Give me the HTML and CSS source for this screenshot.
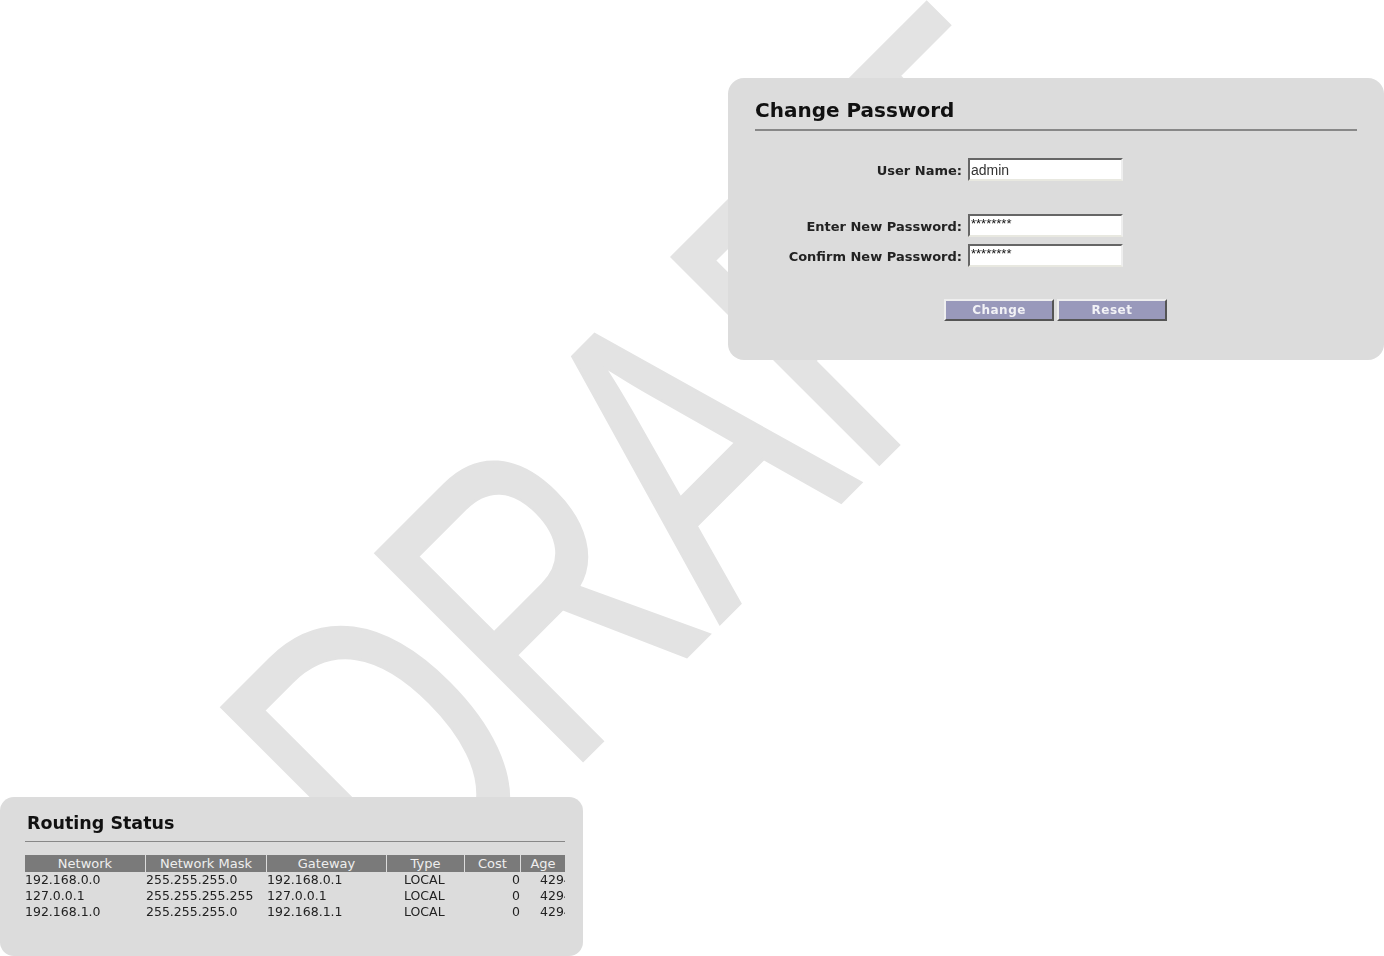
FILE: index.html
```html
<!DOCTYPE html>
<html lang="en">
<head>
<meta charset="utf-8">
<title>Change Password</title>
<link rel="stylesheet" href="styles.css">
</head>
<body>
<div class="watermark" aria-hidden="true">DRA<span class="wm-f">F</span>T</div>
<main class="page">
  <section class="panel panel-password">
    <h2 class="title">Change Password</h2>
    <form class="form">
      <label class="label" for="user">User Name:</label>
      <input class="field" id="user" type="text" value="admin">
      <div class="spacer"></div>
      <label class="label" for="new">Enter New Password:</label>
      <input class="field stars" id="new" type="text" value="********">
      <label class="label" for="confirm">Confirm New Password:</label>
      <input class="field stars" id="confirm" type="text" value="********">
      <div class="actions">
        <button class="btn" type="button">Change</button>
        <button class="btn" type="button">Reset</button>
      </div>
    </form>
  </section>
  <section class="panel panel-routing">
    <h2 class="title title-small">Routing Status</h2>
    <div class="table-clip">
      <table class="routes">
        <colgroup>
          <col class="c1"><col class="c2"><col class="c3"><col class="c4"><col class="c5"><col class="c6">
        </colgroup>
        <thead>
          <tr><th>Network</th><th>Network Mask</th><th>Gateway</th><th>Type</th><th>Cost</th><th>Age</th></tr>
        </thead>
        <tbody>
          <tr><td>192.168.0.0</td><td>255.255.255.0</td><td>192.168.0.1</td><td class="mid">LOCAL</td><td class="num">0</td><td class="age">4294</td></tr>
          <tr><td>127.0.0.1</td><td>255.255.255.255</td><td>127.0.0.1</td><td class="mid">LOCAL</td><td class="num">0</td><td class="age">4294</td></tr>
          <tr><td>192.168.1.0</td><td>255.255.255.0</td><td>192.168.1.1</td><td class="mid">LOCAL</td><td class="num">0</td><td class="age">4294</td></tr>
        </tbody>
      </table>
    </div>
  </section>
</main>
</body>
</html>
```
FILE: styles.css
```css
* { box-sizing: border-box; }
html, body { margin: 0; padding: 0; background: #fff; }
body { position: relative; width: 1384px; height: 956px; overflow: hidden; font-family: "DejaVu Sans", Verdana, sans-serif; color: #111; }

.watermark {
  position: absolute;
  left: 0;
  top: 0;
  font-family: "Liberation Sans", Arial, sans-serif;
  font-size: 426px;
  line-height: 1;
  white-space: nowrap;
  color: #e3e3e3;
  -webkit-text-stroke: 3px #e3e3e3;
  transform-origin: 0 0;
  transform: translate(156px, 677px) rotate(-45deg) scaleX(.708);
}
.wm-f { letter-spacing: 34px; }

.page { position: relative; display: flex; flex-direction: column; height: 956px; overflow: hidden; }

.panel { background: #dcdcdc; border-radius: 16px; }
.panel-password { align-self: flex-end; flex: none; width: 656px; height: 282px; margin-top: 78px; padding: 18px 27px 0; }
.panel-routing { align-self: flex-start; flex: none; width: 583px; height: 159px; margin-top: auto; padding: 15px 18px 0 25px; border-radius: 14px; }

.title { margin: 0; height: 35px; font-size: 20px; line-height: 28px; font-weight: 700; color: #111; border-bottom: 2px solid #888; filter: blur(.3px); }
.title-small { height: 30px; font-size: 17.5px; line-height: 22px; padding-left: 2px; border-bottom: 1px solid #888; }

.form { display: grid; grid-template-columns: 207px 155px; column-gap: 6px; row-gap: 7px; margin-top: 27px; align-items: center; filter: blur(.3px); }
.label { padding-top: 2px; text-align: right; font-size: 13px; font-weight: 700; color: #222; white-space: nowrap; }
.spacer { grid-column: 1 / -1; height: 19px; }
.field { width: 155px; height: 23px; padding: 0 1px; font-family: "Liberation Sans", Arial, sans-serif; font-size: 14px; color: #333; background: #fff; border: 2px solid; border-color: #666 #eee #e8e8e0 #666; border-radius: 0; outline: 0; }
.stars { font-size: 13px; padding-bottom: 5px; color: #111; }

.actions { grid-column: 1 / -1; display: flex; gap: 3px; margin: 25px 0 0 189px; width: 223px; }
.btn { flex: none; width: 110px; height: 22px; padding: 0; font-family: inherit; font-size: 12px; font-weight: 700; letter-spacing: .5px; color: #f2f2f6; background: #9999bb; border: 2px solid; border-color: #eee #555 #555 #eee; border-radius: 0; }

.table-clip { width: 540px; margin-top: 13px; overflow: hidden; filter: blur(.3px); }
.routes { width: 540px; table-layout: fixed; border-collapse: separate; border-spacing: 0; font-size: 12.5px; }
.c1 { width: 121px; } .c2 { width: 121px; } .c3 { width: 120px; } .c4 { width: 78px; } .c5 { width: 56px; } .c6 { width: 44px; }
.routes th { height: 17px; padding: 0; background: #7a7a7a; color: #eee; font-size: 13px; font-weight: 400; line-height: 17px; border-right: 1px solid #dcdcdc; overflow: hidden; white-space: nowrap; }
.routes th:last-child { border-right: 0; }
.routes td { height: 16px; padding: 0; line-height: 16px; color: #222; white-space: nowrap; overflow: hidden; }
.routes .mid { padding-left: 17px; }
.routes .num { text-align: right; padding-right: 1px; }
.routes .age { padding-left: 19px; }
```
